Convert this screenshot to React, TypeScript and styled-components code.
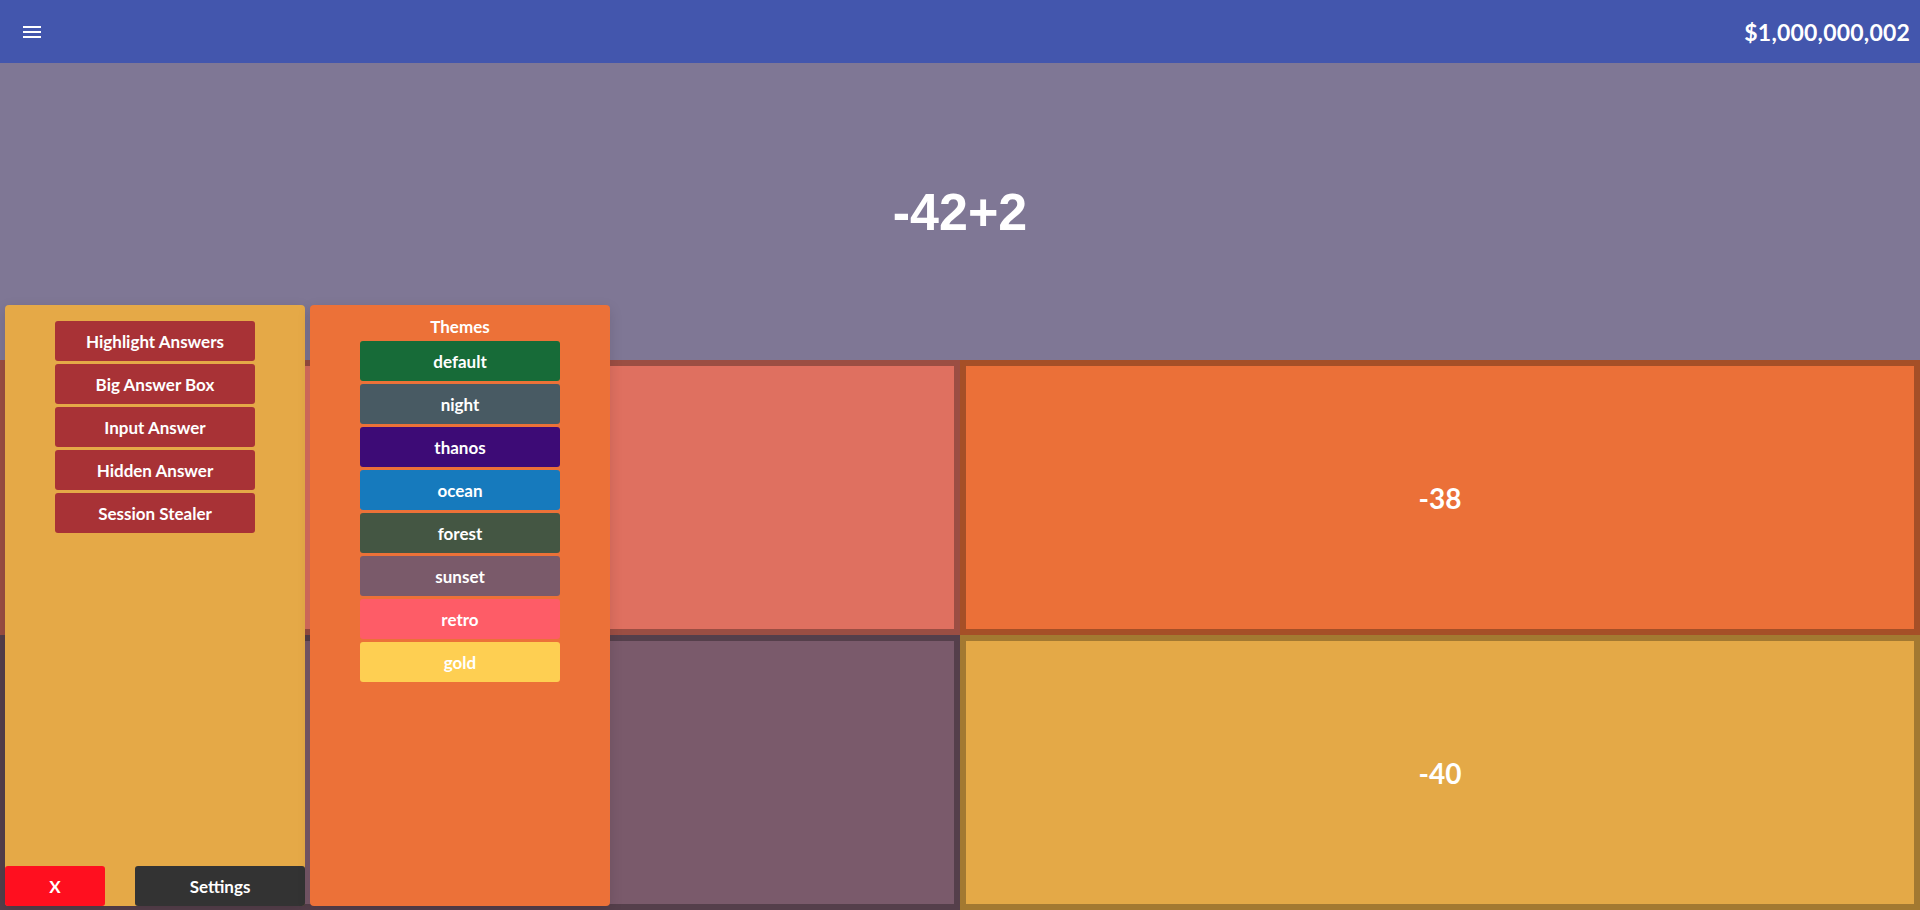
//@ts-nocheck
import React from 'react';
import styled, { createGlobalStyle } from 'styled-components';

const GlobalStyle = createGlobalStyle`
  html, body {
    margin: 0;
    padding: 0;
    height: 100%;
    overflow: hidden;
  }
  body {
    font-family: Lato, "Open Sans", sans-serif;
    color: white;
  }
`;

// the left column answers sit behind the panels, so they stay blank here
const answers = [
  { id: 'a', text: '', bg: '#df7060', border: '#9b4e43' },
  { id: 'b', text: '-38', bg: '#eb7038', border: '#a54f27' },
  { id: 'c', text: '', bg: '#7a5a6b', border: '#553f4b' },
  { id: 'd', text: '-40', bg: '#e4a947', border: '#a37931' },
];

const modes = [
  'Highlight Answers',
  'Big Answer Box',
  'Input Answer',
  'Hidden Answer',
  'Session Stealer',
];

const themes = [
  { name: 'default', color: '#176b38' },
  { name: 'night', color: '#485a63' },
  { name: 'thanos', color: '#3d0b76' },
  { name: 'ocean', color: '#167abd' },
  { name: 'forest', color: '#445643' },
  { name: 'sunset', color: '#7a5a6a' },
  { name: 'retro', color: '#fe5c67' },
  { name: 'gold', color: '#fecf52' },
];

export default function App() {
  return (
    <Page>
      <GlobalStyle />
      <Header>
        <MenuButton>
          <svg width="18" height="12" viewBox="0 0 18 12">
            <rect x="0" y="0" width="18" height="2" fill="white" />
            <rect x="0" y="5" width="18" height="2" fill="white" />
            <rect x="0" y="10" width="18" height="2" fill="white" />
          </svg>
        </MenuButton>
        <Money>$1,000,000,002</Money>
      </Header>

      <Question>-42+2</Question>

      <AnswerGrid>
        {answers.map((a) => (
          <Answer key={a.id} bg={a.bg} border={a.border}>
            {a.text}
          </Answer>
        ))}
      </AnswerGrid>

      <Overlay>
        <ModPanel>
          {modes.map((m) => (
            <ModButton key={m}>{m}</ModButton>
          ))}
          <BottomRow>
            <CloseButton>X</CloseButton>
            <SettingsButton>Settings</SettingsButton>
          </BottomRow>
        </ModPanel>

        <ThemePanel>
          <PanelTitle>Themes</PanelTitle>
          {themes.map((t) => (
            <ThemeButton key={t.name} color={t.color}>
              {t.name}
            </ThemeButton>
          ))}
        </ThemePanel>
      </Overlay>
    </Page>
  );
}

const Page = styled.div`
  position: relative;
  width: 1920px;
  height: 910px;
  display: flex;
  flex-direction: column;
  background: #7f7795;
`;

const Header = styled.header`
  height: 63px;
  flex-shrink: 0;
  display: flex;
  align-items: center;
  justify-content: space-between;
  padding: 0 10px 0 23px;
  background: #4356ad;
`;

const MenuButton = styled.div`
  display: flex;
  align-items: center;
  width: 18px;
  height: 12px;
  cursor: pointer;
`;

const Money = styled.div`
  font-family: Lato, sans-serif;
  font-weight: 700;
  font-size: 23px;
  letter-spacing: 0.2px;
`;

const Question = styled.div`
  height: 297px;
  flex-shrink: 0;
  display: flex;
  align-items: center;
  justify-content: center;
  font-family: 'Liberation Sans', Arial, sans-serif;
  font-weight: 700;
  font-size: 52px;
`;

const AnswerGrid = styled.div`
  flex: 1;
  display: grid;
  grid-template-columns: 1fr 1fr;
  grid-template-rows: 1fr 1fr;
`;

const Answer = styled.div`
  display: flex;
  align-items: center;
  justify-content: center;
  background: ${(p) => p.bg};
  border: 6px solid ${(p) => p.border};
  font-weight: 700;
  font-size: 28px;
`;

const Overlay = styled.div`
  position: absolute;
  left: 5px;
  top: 305px;
  height: 601px;
  display: flex;
  gap: 5px;
`;

const Panel = styled.div`
  width: 300px;
  height: 100%;
  display: flex;
  flex-direction: column;
  align-items: center;
  gap: 3px;
  border-radius: 4px;
  box-shadow: 0 4px 14px rgba(0, 0, 0, 0.12);
`;

const ModPanel = styled(Panel)`
  background: #e5a947;
  padding-top: 16px;
  box-sizing: border-box;
`;

const ThemePanel = styled(Panel)`
  background: #ec7138;
  padding-top: 12px;
  box-sizing: border-box;
`;

const PanelTitle = styled.div`
  font-weight: 700;
  font-size: 17px;
  line-height: 20px;
  margin-bottom: 1px;
`;

const BaseButton = styled.button`
  height: 40px;
  border: none;
  border-radius: 3px;
  color: white;
  font-family: Lato, sans-serif;
  font-weight: 700;
  font-size: 17px;
  cursor: pointer;
  padding: 0;
`;

const ModButton = styled(BaseButton)`
  width: 200px;
  background: #a83236;
`;

const ThemeButton = styled(BaseButton)`
  width: 200px;
  background: ${(p) => p.color};
`;

const BottomRow = styled.div`
  margin-top: auto;
  width: 100%;
  display: flex;
  justify-content: space-between;
`;

const CloseButton = styled(BaseButton)`
  width: 100px;
  background: #ff0f1f;
`;

const SettingsButton = styled(BaseButton)`
  width: 170px;
  background: #333333;
`;
